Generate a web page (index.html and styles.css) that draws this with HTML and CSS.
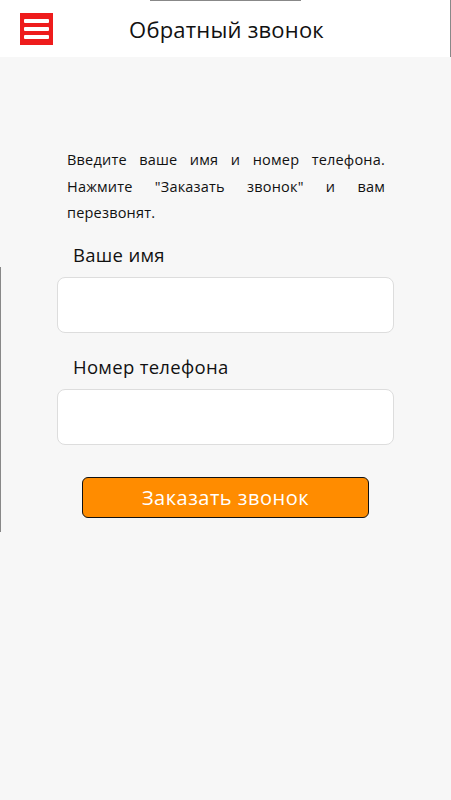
FILE: index.html
```html
<!DOCTYPE html>
<html lang="ru">
<head>
<meta charset="utf-8">
<title>Обратный звонок</title>
<link rel="stylesheet" href="styles.css">
</head>
<body>
<div class="top-line"></div>
<div class="right-line"></div>
<div class="left-line"></div>
<header class="header">
  <button class="menu" aria-label="Меню">
    <span></span><span></span><span></span>
  </button>
  <h1 class="title">Обратный звонок</h1>
</header>
<main class="main">
  <p class="intro">Введите ваше имя и номер телефона. Нажмите "Заказать звонок" и вам перезвонят.</p>
  <form class="form">
    <label class="label" for="name">Ваше имя</label>
    <input class="field" id="name" type="text">
    <label class="label label-2" for="phone">Номер телефона</label>
    <input class="field" id="phone" type="tel">
    <button type="button" class="submit">Заказать звонок</button>
  </form>
</main>
</body>
</html>
```
FILE: styles.css
```css
html, body {
  margin: 0;
  padding: 0;
}
body {
  font-family: "Open Sans", "Noto Sans", sans-serif;
  background: #f7f7f7;
  color: #111;
  min-height: 800px;
  position: relative;
}
.top-line {
  position: absolute;
  left: 150px;
  top: 0;
  width: 151px;
  height: 1px;
  background: #888;
  z-index: 2;
}
.right-line {
  position: absolute;
  right: 0;
  top: 0;
  width: 1px;
  height: 57px;
  background: #888;
  z-index: 2;
}
.left-line {
  position: absolute;
  left: 0;
  top: 267px;
  width: 1px;
  height: 265px;
  background: #888;
  z-index: 2;
}
.header {
  height: 57px;
  background: #fff;
  display: flex;
  align-items: center;
  position: relative;
}
.menu {
  margin-left: 20px;
  width: 33px;
  height: 32px;
  background: #ee1c1c;
  border: none;
  padding: 6px 4px;
  display: flex;
  flex-direction: column;
  justify-content: space-between;
  box-sizing: border-box;
}
.menu span {
  display: block;
  height: 4px;
  background: #fff;
  border-radius: 1px;
}
.title {
  margin: 0;
  font-size: 22px;
  font-weight: 500;
  position: absolute;
  left: 0;
  right: 0;
  text-align: center;
  letter-spacing: 0.2px;
  padding-left: 2px;
}
.main {
  padding: 90px 57px 0 57px;
}
.intro {
  margin: 0 9px 0 10px;
  font-size: 14.5px;
  line-height: 26.5px;
  text-align: justify;
  letter-spacing: 0.2px;
}
.form {
  display: flex;
  flex-direction: column;
  margin-top: 16px;
}
.label {
  font-size: 18.5px;
  padding-left: 16px;
  line-height: 24px;
  margin-bottom: 10px;
  letter-spacing: 0.3px;
}
.label-2 {
  margin-top: 22px;
}
.field {
  height: 56px;
  box-sizing: border-box;
  border: 1px solid #ddd;
  border-radius: 8px;
  background: #fff;
  font-size: 16px;
  padding: 0 12px;
}
.submit {
  margin: 32px 25px 0 25px;
  height: 41px;
  background: #ff8c00;
  border: 1px solid #111;
  border-radius: 6px;
  color: #fff;
  font-family: inherit;
  font-size: 20px;
  font-weight: 500;
  letter-spacing: 0.5px;
}
```
